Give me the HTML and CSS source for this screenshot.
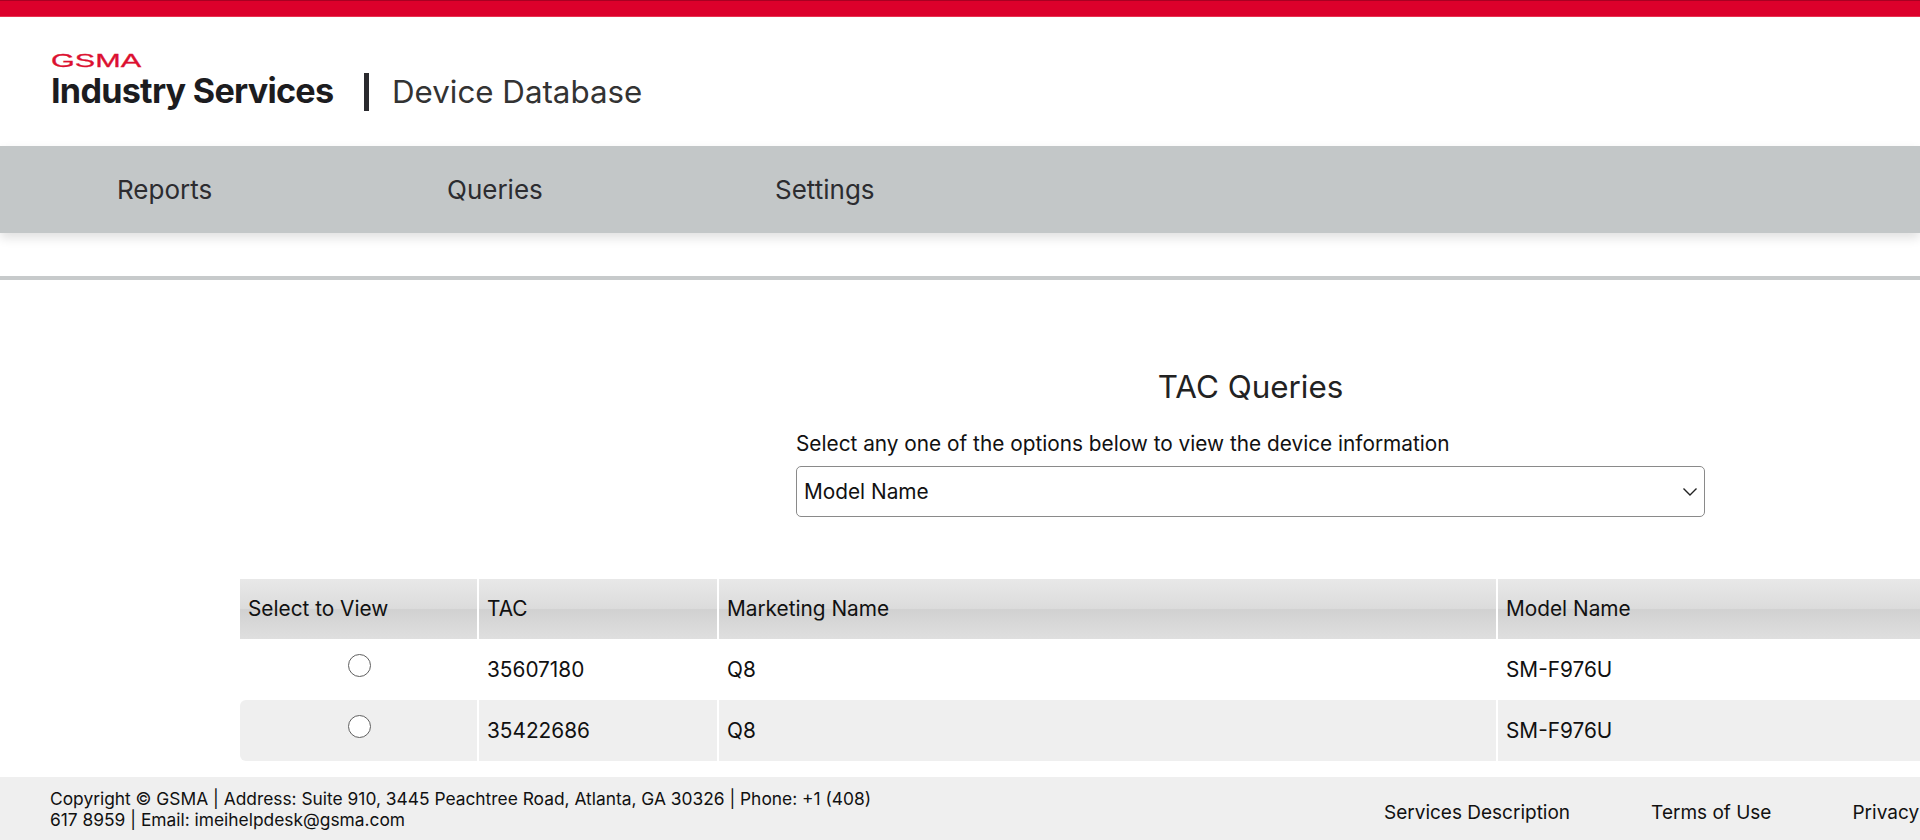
FILE: index.html
```html
<!DOCTYPE html>
<html lang="en">
<head>
<meta charset="utf-8">
<title>TAC Queries</title>
<link rel="stylesheet" href="styles.css">
</head>
<body>
<div class="page">
  <div class="topbar"></div>
  <header class="brand">
    <div class="logo">
      <span class="gsma">GSMA</span>
      <span class="industry">Industry Services</span>
    </div>
    <span class="divider"></span>
    <span class="product">Device Database</span>
  </header>
  <nav class="nav">
    <a class="nav-item">Reports</a>
    <a class="nav-item">Queries</a>
    <a class="nav-item">Settings</a>
  </nav>
  <div class="rule"></div>
  <main class="main">
    <section class="query">
      <h1 class="title">TAC Queries</h1>
      <label class="label">Select any one of the options below to view the device information</label>
      <div class="select">
        <span>Model Name</span>
        <svg class="chevron" width="16" height="10" viewBox="0 0 16 10"><path d="M1.5 1.5 8 8l6.500-6.500" fill="none" stroke="#222" stroke-width="1.400"/></svg>
      </div>
    </section>
    <div class="table">
      <div class="cell head">Select to View</div>
      <div class="cell head">TAC</div>
      <div class="cell head">Marketing Name</div>
      <div class="cell head">Model Name</div>
      <div class="cell radio-cell"><span class="radio"></span></div>
      <div class="cell">35607180</div>
      <div class="cell">Q8</div>
      <div class="cell">SM-F976U</div>
      <div class="cell alt first radio-cell"><span class="radio"></span></div>
      <div class="cell alt">35422686</div>
      <div class="cell alt">Q8</div>
      <div class="cell alt">SM-F976U</div>
    </div>
  </main>
  <footer class="footer">
    <p class="copyright">Copyright © GSMA | Address: Suite 910, 3445 Peachtree Road, Atlanta, GA 30326 | Phone: +1 (408) 617 8959 | Email: imeihelpdesk@gsma.com</p>
    <div class="links">
      <a>Services Description</a>
      <a>Terms of Use</a>
      <a>Privacy Policy</a>
    </div>
  </footer>
</div>
</body>
</html>
```
FILE: styles.css
```css
* { box-sizing: border-box; }
html, body { margin: 0; height: 100%; overflow: hidden; }
body { font-family: Inter, "Liberation Sans", sans-serif; color: #111; background: #fff; }
.page { height: 840px; width: 1920px; display: flex; flex-direction: column; overflow: hidden; }
.topbar { height: 17px; background: #dc002b; border-top: 1px solid #a80022; border-bottom: 1px solid #e8324f; flex: none; }
.brand { height: 129px; flex: none; display: flex; align-items: flex-start; padding: 36px 0 0 51px; }
.logo { display: flex; flex-direction: column; width: 313px; }
.gsma { display: block; font-family: "Liberation Sans", sans-serif; font-size: 19px; line-height: 15px; height: 15px; color: #dc1030; transform: scaleX(1.610); transform-origin: left center; -webkit-text-stroke: .3px #dc1030; }
.industry { font-size: 34.2px; line-height: 40px; font-weight: 700; color: #1c1c1f; letter-spacing: -.75px; white-space: nowrap; margin-top: 3px; }
.divider { width: 5px; height: 38px; background: #2a2a2e; margin-top: 20px; }
.product { font-size: 31.3px; line-height: 40px; color: #333; margin: 19px 0 0 23px; white-space: nowrap; }
.nav { height: 87px; flex: none; display: grid; grid-template-columns: 330px 328px 329px; align-items: center; padding-left: 117px; background: #c3c7c8; box-shadow: 0 5px 10px rgba(0,0,0,.12); position: relative; }
.nav-item { font-size: 26px; color: #2c2c30; }
.rule { height: 4px; margin-top: 43px; background: #c7cacb; flex: none; }
.main { flex: 1; padding: 0 0 0 240px; min-height: 0; }
.query { width: 909px; margin: 87px 0 0 556px; display: flex; flex-direction: column; }
.title { margin: 0; font-size: 31.4px; line-height: 40px; font-weight: 400; text-align: center; color: #222; }
.label { font-size: 20.8px; line-height: 28px; margin-top: 23px; color: #111; }
.select { height: 51px; margin-top: 8px; display: flex; align-items: center; justify-content: space-between; padding: 0 6px 0 7px; border: 1px solid #8a8a8a; border-radius: 5px; font-size: 20.8px; }
.table { display: grid; grid-template-columns: 237px 238px 777px 600px; column-gap: 2px; margin-top: 62px; width: 1864px; }
.cell { height: 61px; display: flex; align-items: center; padding: 0 8px 1px; font-size: 20.8px; }
.head { height: 60px; background: linear-gradient(#e8e8e8 0%, #dcdcdc 49%, #d1d1d1 51%, #dfdfdf 100%); }
.radio-cell { justify-content: center; padding: 0 5px 9px 7px; }
.alt { background: #efefef; }
.first { border-radius: 6px 0 0 6px; }
.radio { width: 23px; height: 23px; border-radius: 50%; border: 1.500px solid #5f5f5f; background: #fff; }
.footer { height: 63px; flex: none; display: flex; align-items: center; justify-content: space-between; padding: 0 0 0 50px; background: #efefef; position: relative; font-size: 17.37px; width: 2100px; }
.copyright { margin: 0; width: 835px; line-height: 21px; color: #111; }
.links { display: flex; gap: 81px; position: absolute; left: 1384px; top: 24px; white-space: nowrap; font-size: 19px; color: #111; }
```
